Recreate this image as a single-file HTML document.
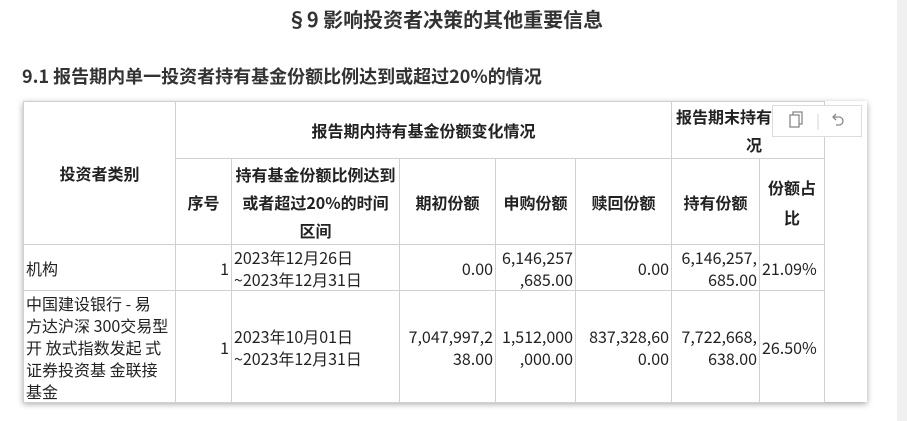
<!DOCTYPE html>
<html><head><meta charset="utf-8"><style>
body{margin:0;width:907px;height:421px;background:#fff;font-family:"Noto Sans CJK SC","Liberation Sans",sans-serif;color:#222;position:relative;overflow:hidden}
.h1{position:absolute;top:5px;left:0;width:890px;text-align:center;font-size:20px;line-height:28px;font-weight:bold;color:#333}
.h2{position:absolute;top:63px;left:22px;font-size:18px;line-height:26px;font-weight:bold;color:#333}
.strip{position:absolute;left:897px;top:0;width:10px;height:421px;background:#f0f0f0}
.card{position:absolute;left:23px;top:101px;width:844px;height:301px;background:#fff;box-shadow:0 2px 6px rgba(0,0,0,.35)}
table{position:absolute;left:0;top:0;border-collapse:collapse;table-layout:fixed;font-size:16px;line-height:22px}
td{border:1px solid #d0d0d0;padding:0 2px;vertical-align:middle;overflow:hidden;white-space:nowrap}
th{border:1px solid #d0d0d0;font-weight:bold;padding:0 2px;text-align:center;font-size:16px;line-height:28px;white-space:nowrap;overflow:hidden}
.r{text-align:right}
.tool{position:absolute;left:749px;top:4px;width:88px;height:30px;border:1px solid #ddd;background:#fff}
</style></head><body>
<div class="h1">§9 影响投资者决策的其他重要信息</div>
<div class="h2">9.1 报告期内单一投资者持有基金份额比例达到或超过20%的情况</div>
<div class="strip"></div>
<div class="card">
<table>
<colgroup><col style="width:152px"><col style="width:56px"><col style="width:168px"><col style="width:96px"><col style="width:80px"><col style="width:96px"><col style="width:88px"><col style="width:65px"></colgroup>
<tr style="height:57px"><th rowspan="2">投资者类别</th><th colspan="5">报告期内持有基金份额变化情况</th><th colspan="2" style="text-align:left;padding-left:4px">报告期末持有<br><span style="padding-left:70px">况</span></th></tr>
<tr style="height:86px"><th>序号</th><th>持有基金份额比例达到<br>或者超过20%的时间<br>区间</th><th>期初份额</th><th>申购份额</th><th>赎回份额</th><th>持有份额</th><th style="line-height:30px">份额占<br>比</th></tr>
<tr style="height:46px"><td>机构</td><td class="r">1</td><td>2023年12月26日<br>~2023年12月31日</td><td class="r">0.00</td><td class="r">6,146,257<br>,685.00</td><td class="r">0.00</td><td class="r">6,146,257,<br>685.00</td><td>21.09%</td></tr>
<tr style="height:112px"><td>中国建设银行 - 易<br>方达沪深 300交易型<br>开 放式指数发起 式<br>证券投资基 金联接<br>基金</td><td class="r">1</td><td>2023年10月01日<br>~2023年12月31日</td><td class="r">7,047,997,2<br>38.00</td><td class="r">1,512,000<br>,000.00</td><td class="r">837,328,60<br>0.00</td><td class="r">7,722,668,<br>638.00</td><td>26.50%</td></tr>
</table>
<div class="tool">
<svg width="88" height="30" viewBox="0 0 88 30"><g fill="none" stroke="#888" stroke-width="1.3"><rect x="17" y="9" width="9" height="12"/><path d="M20 9V6h9v12h-3"/><path d="M45 8v16" stroke="#ddd"/><path d="M63 8l-3 3 3 3M60 11h6a4 4 0 0 1 0 8h-3"/></g></svg>
</div>
</div>
</body></html>
